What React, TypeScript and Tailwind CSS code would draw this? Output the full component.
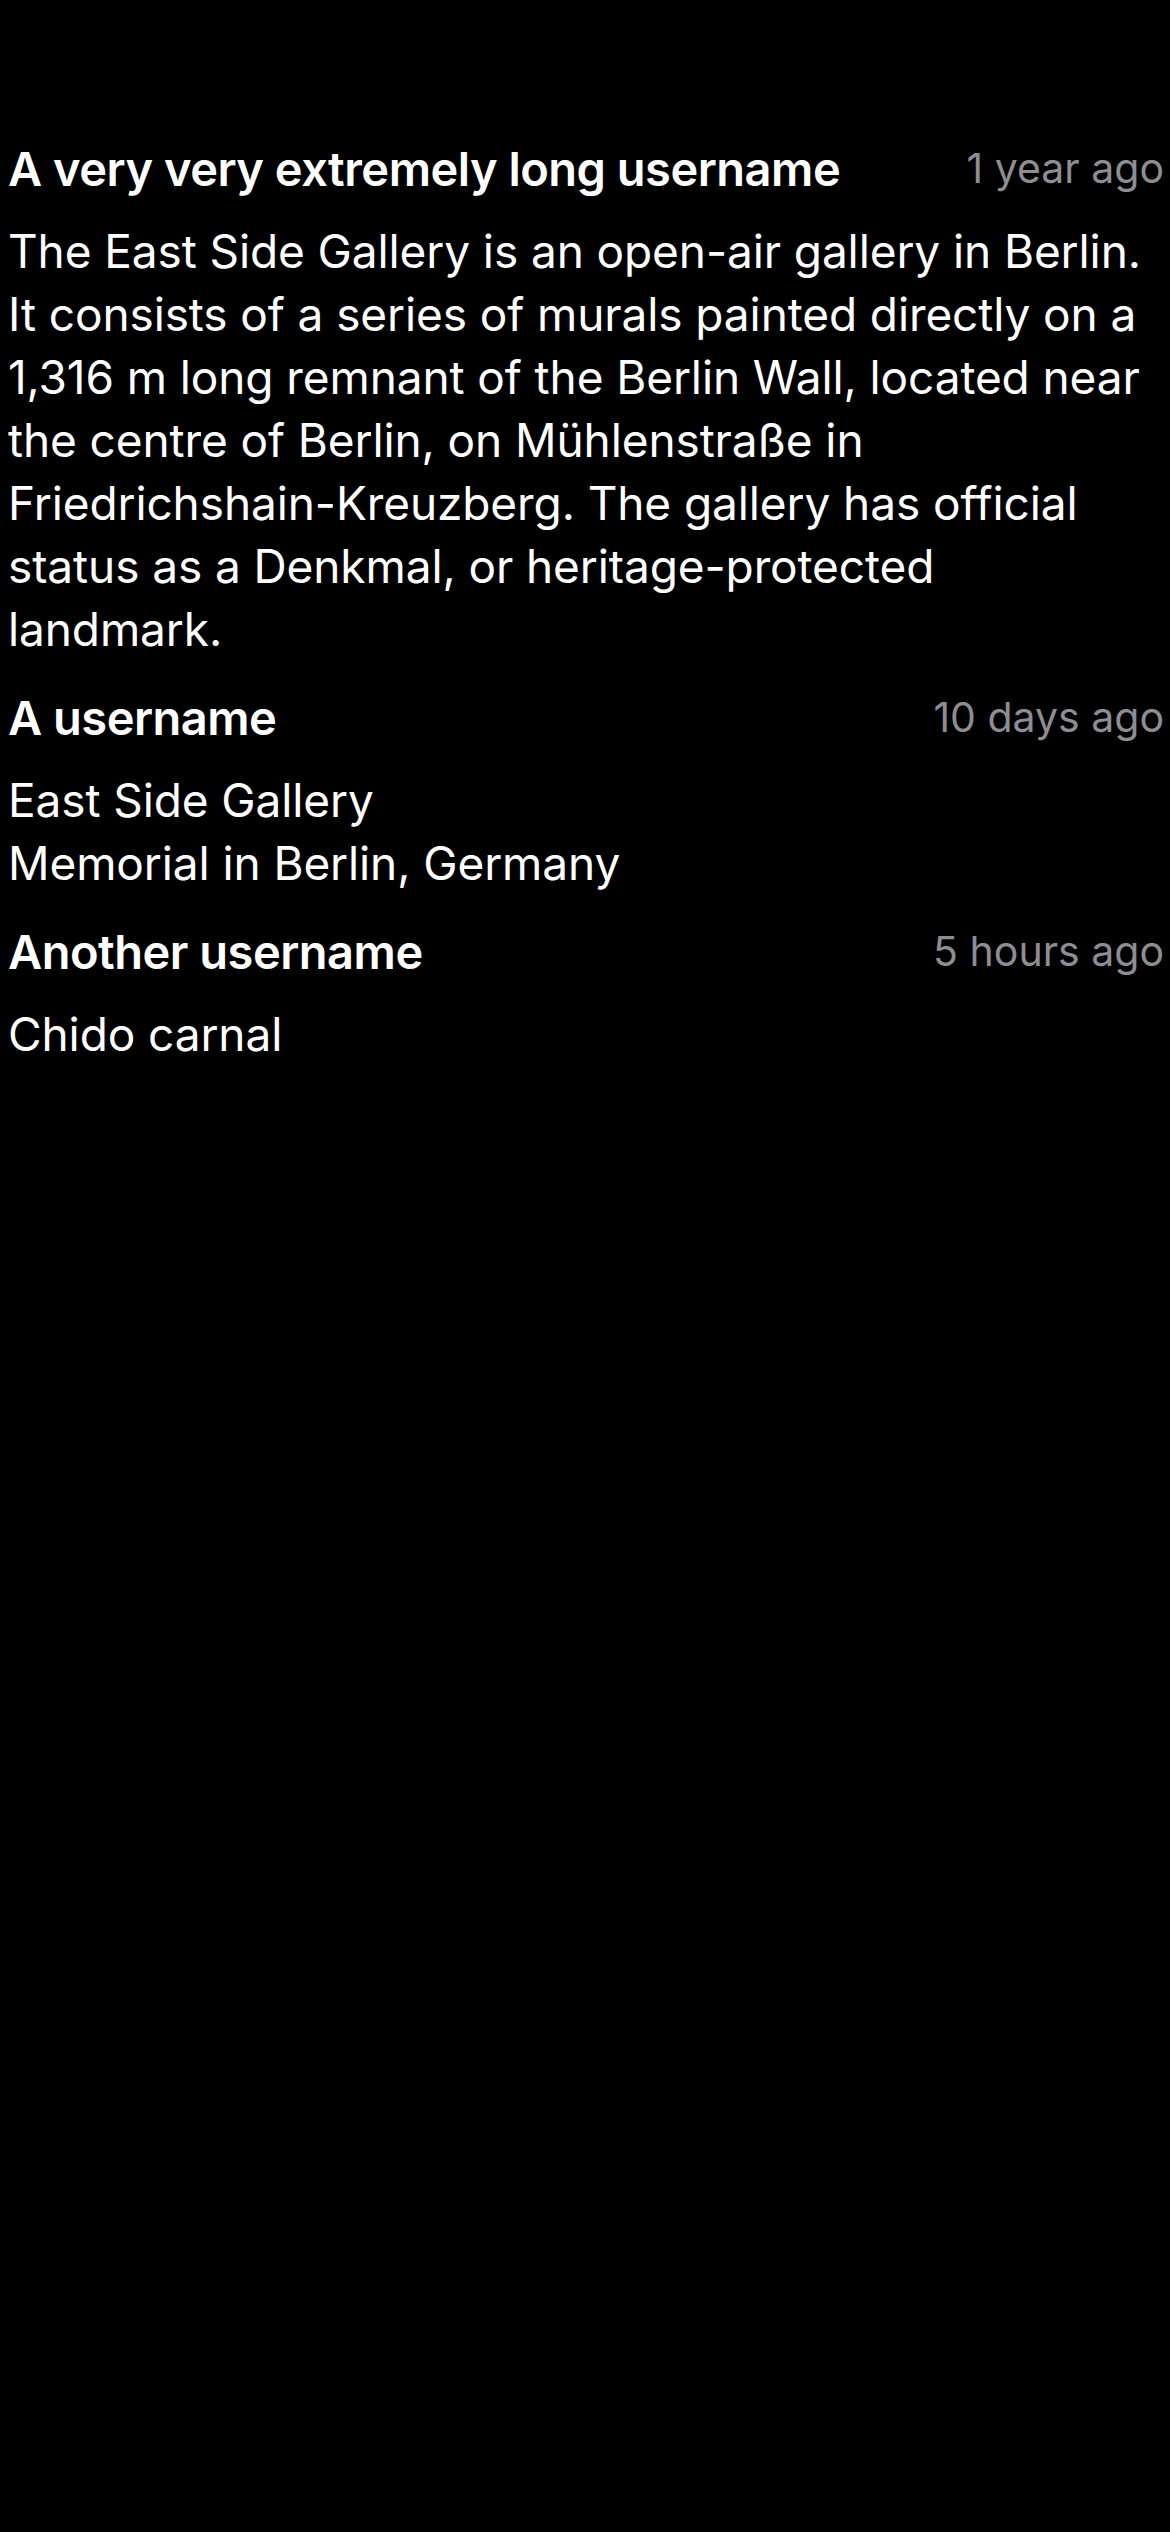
const comments = [
  {
    user: 'A very very extremely long username',
    time: '1 year ago',
    lines: [
      'The East Side Gallery is an open-air gallery in Berlin.',
      'It consists of a series of murals painted directly on a',
      '1,316 m long remnant of the Berlin Wall, located near',
      'the centre of Berlin, on Mühlenstraße in',
      'Friedrichshain-Kreuzberg. The gallery has official',
      'status as a Denkmal, or heritage-protected',
      'landmark.',
    ],
  },
  {
    user: 'A username',
    time: '10 days ago',
    lines: ['East Side Gallery', 'Memorial in Berlin, Germany'],
  },
  {
    user: 'Another username',
    time: '5 hours ago',
    lines: ['Chido carnal'],
  },
];

export default function App() {
  return (
    <div
      className="min-h-[2532px] w-[1170px] bg-black text-white pt-[137px] pl-[8px] pr-[6px] flex flex-col gap-[25px]"
      style={{ fontFamily: 'Inter, "Noto Sans", sans-serif' }}
    >
      {comments.map((c) => (
        <div key={c.user} className="flex flex-col gap-[20px]">
          <div className="flex items-center justify-between leading-[63px]">
            <span className="text-[47px] font-semibold tracking-[-0.5px]">{c.user}</span>
            <span className="text-[41px] text-[#8d8d93]">{c.time}</span>
          </div>
          <div className="text-[46px] leading-[63px] tracking-[-0.1px]">
            {c.lines.map((l) => (
              <p key={l} className="whitespace-nowrap">{l}</p>
            ))}
          </div>
        </div>
      ))}
    </div>
  );
}
